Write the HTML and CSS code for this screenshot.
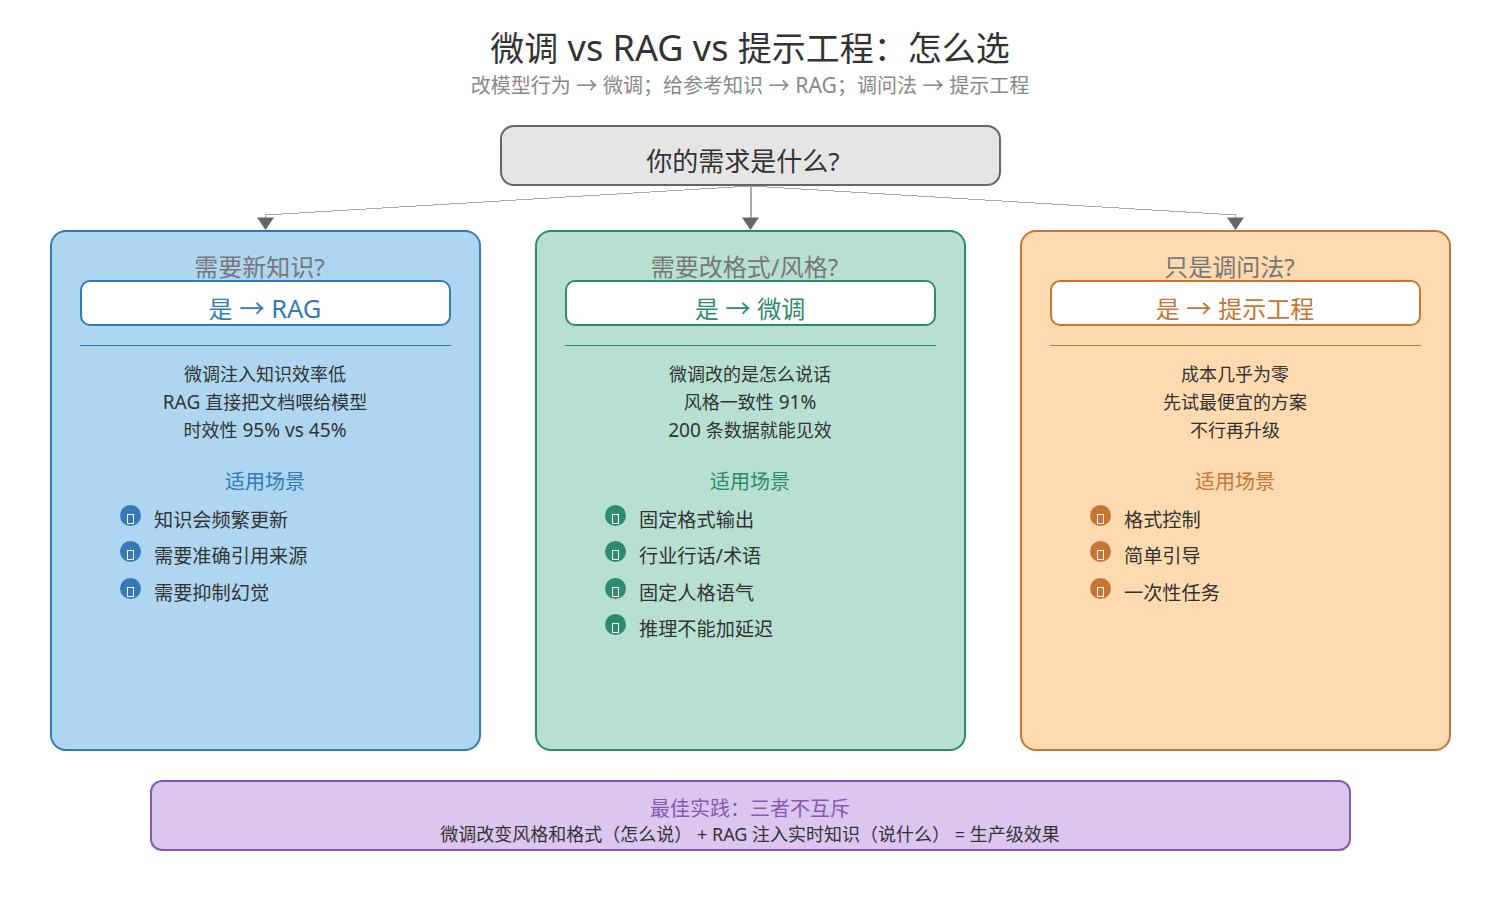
FILE: index.html
```html
<!DOCTYPE html>
<html lang="zh-CN">

<head>
    <meta charset="UTF-8">
    <title>微调 vs RAG vs 提示工程&#xFF1A;怎么选</title>
    <link rel="stylesheet" href="styles.css">
</head>

<body>
    <div class="page">
        <h1 class="title">微调<span class="en"> vs RAG vs </span>提示工程&#xFF1A;怎么选</h1>
        <p class="subtitle">改模型行为<span class="en"> → </span>微调&#xFF1B;给参考知识<span class="en"> → RAG</span>&#xFF1B;调问法<span class="en"> → </span>提示工程</p>

        <div class="root">你的需求是什么?</div>

        <svg class="links" width="1500" height="44" viewBox="0 0 1500 44">
            <path d="M750.500 0L265.500 29V32M750.500 0L1235.500 29V32" fill="none" stroke="#aaa" stroke-width="1" shape-rendering="crispEdges" />
            <path d="M751 0V32" fill="none" stroke="#aaa" stroke-width="2" />
            <path d="M257 31.500H274L265.500 44ZM742 31.500H759L750.500 44ZM1227 31.500H1244L1235.500 44Z" fill="#666" />
        </svg>

        <div class="cards">
            <section class="card blue">
                <h2 class="ask">需要新知识?</h2>
                <div class="answer">是<span class="en"> → RAG</span></div>
                <hr class="rule">
                <p class="why">微调注入知识效率低<br><span class="en">RAG </span>直接把文档喂给模型<br>时效性<span class="en"> 95% vs 45%</span></p>
                <h3 class="scene">适用场景</h3>
                <ul class="uses">
                    <li><span class="dot"><i></i></span>知识会频繁更新</li>
                    <li><span class="dot"><i></i></span>需要准确引用来源</li>
                    <li><span class="dot"><i></i></span>需要抑制幻觉</li>
                </ul>
            </section>

            <section class="card green">
                <h2 class="ask">需要改格式/风格?</h2>
                <div class="answer">是<span class="en"> → </span>微调</div>
                <hr class="rule">
                <p class="why">微调改的是怎么说话<br>风格一致性<span class="en"> 91%</span><br><span class="en">200 </span>条数据就能见效</p>
                <h3 class="scene">适用场景</h3>
                <ul class="uses">
                    <li><span class="dot"><i></i></span>固定格式输出</li>
                    <li><span class="dot"><i></i></span>行业行话/术语</li>
                    <li><span class="dot"><i></i></span>固定人格语气</li>
                    <li><span class="dot"><i></i></span>推理不能加延迟</li>
                </ul>
            </section>

            <section class="card orange">
                <h2 class="ask">只是调问法?</h2>
                <div class="answer">是<span class="en"> → </span>提示工程</div>
                <hr class="rule">
                <p class="why">成本几乎为零<br>先试最便宜的方案<br>不行再升级</p>
                <h3 class="scene">适用场景</h3>
                <ul class="uses">
                    <li><span class="dot"><i></i></span>格式控制</li>
                    <li><span class="dot"><i></i></span>简单引导</li>
                    <li><span class="dot"><i></i></span>一次性任务</li>
                </ul>
            </section>
        </div>

        <div class="best">
            <div class="best-title">最佳实践&#xFF1A;三者不互斥</div>
            <div class="best-text">微调改变风格和格式&#xFF08;怎么说&#xFF09; + RAG 注入实时知识&#xFF08;说什么&#xFF09; = 生产级效果</div>
        </div>
    </div>
</body>

</html>
```

FILE: styles.css
```css
html, body {
    margin: 0;
    padding: 0;
    background: #fff;
}
body {
    font-family: "Noto Sans", "Noto Sans CJK SC", sans-serif;
    color: #333;
}
.page {
    width: 1500px;
    height: 920px;
    padding-top: 24px;
    box-sizing: border-box;
}
/* latin runs sit a little wider than the CJK around them */
.en {
    font-size: 1.060em;
}
.title {
    margin: 0;
    font-size: 34px;
    font-weight: 400;
    line-height: 46px;
    text-align: center;
}
.subtitle {
    margin: 0;
    font-size: 20px;
    line-height: 28px;
    color: #888;
    text-align: center;
}
.root {
    width: 501px;
    height: 61px;
    margin: 25px auto 0;
    padding-top: 15px;
    padding-right: 14px;
    box-sizing: border-box;
    border: 2px solid #666;
    border-radius: 14px;
    background: #e5e5e5;
    font-size: 26px;
    line-height: 38px;
    text-align: center;
}
.links {
    display: block;
}
.cards {
    display: grid;
    grid-template-columns: repeat(3, 431px);
    column-gap: 54px;
    justify-content: center;
    padding-left: 1px;
}
.card {
    height: 521px;
    padding: 0 28px;
    box-sizing: border-box;
    border: 2px solid;
    border-radius: 16px;
}
.blue { background: #aed6f1; border-color: #337ab7; --tone: #337ab7; }
.green { background: #b7e0d2; border-color: #2e8b6e; --tone: #2e8b6e; }
.orange { background: #fddab0; border-color: #c87533; --tone: #c87533; }
.ask {
    height: 30px;
    margin: 18px 0 0;
    padding-right: 12px;
    font-size: 24px;
    font-weight: 400;
    line-height: 33px;
    color: #777;
    text-align: center;
}
.answer {
    height: 46px;
    padding-top: 9px;
    padding-right: 1px;
    box-sizing: border-box;
    border: 2px solid var(--tone);
    border-radius: 10px;
    background: #fff;
    color: var(--tone);
    font-size: 24px;
    line-height: 34px;
    text-align: center;
}
.rule {
    height: 1px;
    margin: 19px 0 0;
    border: 0;
    background: var(--tone);
}
.why {
    margin: 14px 0 0;
    padding-right: 1px;
    font-size: 18px;
    line-height: 28px;
    text-align: center;
}
.scene {
    margin: 24px 0 0;
    padding-right: 1px;
    font-size: 20px;
    font-weight: 400;
    line-height: 28px;
    color: var(--tone);
    text-align: center;
}
.uses {
    margin: 6px 0 0;
    padding: 0 0 0 40px;
    list-style: none;
}
.uses li {
    display: flex;
    gap: 13px;
    font-size: 19.200px;
    line-height: 36.400px;
}
.dot {
    flex: none;
    width: 21px;
    height: 21px;
    margin-top: 3px;
    border-radius: 50%;
    background: var(--tone);
    display: flex;
    justify-content: center;
    align-items: flex-end;
}
.dot i {
    width: 5px;
    height: 8px;
    margin-bottom: 2px;
    border: 1px solid #fff;
}
.best {
    width: 1201px;
    height: 71px;
    margin: 29px auto 0;
    padding-top: 13px;
    box-sizing: border-box;
    border: 2px solid #8559b0;
    border-radius: 12px;
    background: #dcc6f0;
    text-align: center;
}
.best-title {
    font-size: 20px;
    line-height: 28px;
    color: #8559b0;
}
.best-text {
    font-size: 18px;
    line-height: 22px;
}
```
